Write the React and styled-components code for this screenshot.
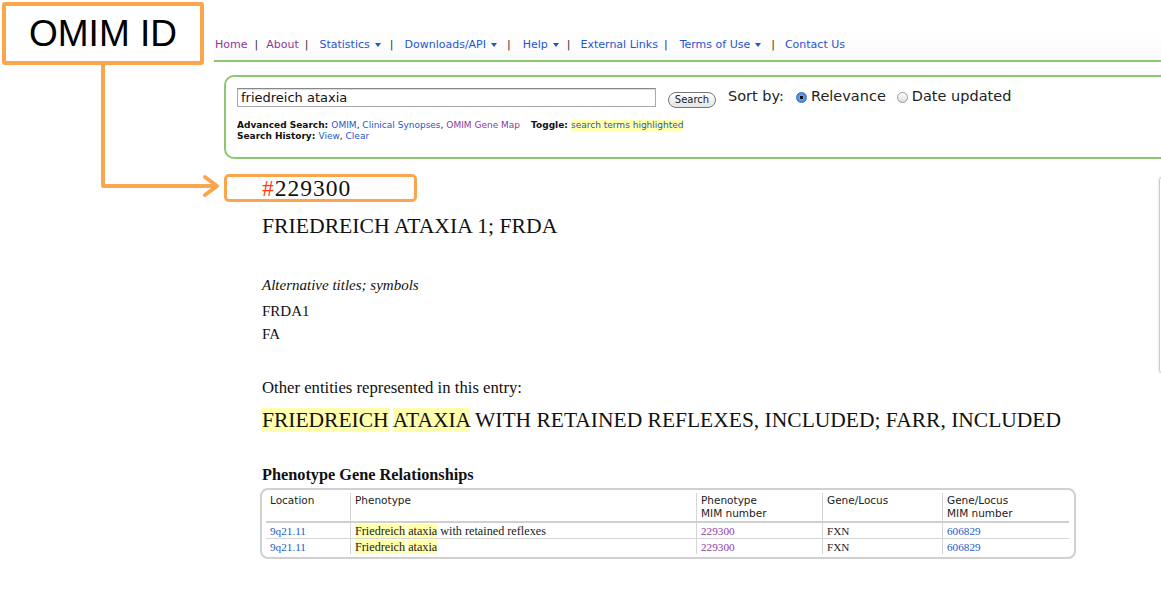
import React from "react";
import styled, { createGlobalStyle } from "styled-components";

const GlobalStyle = createGlobalStyle`
  body {
    margin: 0;
    background: #fff;
    overflow: hidden;
  }
`;

const BLUE = "#1f56cc";
const PURPLE = "#8b3a9c";
const ORANGE = "#fba64c";
const GREEN = "#8cc870";
const HIGHLIGHT = "#ffffad";

const Page = styled.div`
  position: relative;
  width: 1161px;
  height: 591px;
  padding-left: 214px;
  box-sizing: border-box;
  overflow: hidden;
`;

const Nav = styled.nav`
  margin-top: 28px;
  height: 32px;
  display: flex;
  align-items: center;
  border-bottom: 2px solid ${GREEN};
  background: linear-gradient(#fff, #fafafa);
  font-family: "DejaVu Sans", sans-serif;
  font-size: 11px;
  width: 1000px;
`;

const NavLink = styled.a`
  color: ${(p) => (p.$visited ? PURPLE : BLUE)};
  text-decoration: none;
  display: inline-flex;
  align-items: center;
  gap: 5px;
  padding-left: ${(p) => (p.$first ? "1px" : "0")};
`;

const Caret = styled.span`
  width: 0;
  height: 0;
  border-left: 3px solid transparent;
  border-right: 3px solid transparent;
  border-top: 4px solid ${BLUE};
  margin-top: 1px;
`;

const Sep = styled.span`
  color: #333;
  margin: 0 ${(p) => p.$wide}px 0 ${(p) => p.$near}px;
`;

const SearchBox = styled.div`
  margin: 13px 0 0 10px;
  width: 1000px;
  height: 84px;
  box-sizing: border-box;
  border: 2px solid ${GREEN};
  border-radius: 10px;
  padding: 11px 11px;
  font-family: "DejaVu Sans", sans-serif;
`;

const SearchRow = styled.div`
  display: flex;
  align-items: center;
  height: 19px;
`;

const Input = styled.div`
  width: 419px;
  height: 19px;
  box-sizing: border-box;
  border: 1px solid #aaa;
  border-top-color: #888;
  box-shadow: inset 0 1px 1px rgba(0, 0, 0, 0.15);
  font-size: 13px;
  line-height: 17px;
  padding-left: 3px;
  color: #111;
`;

const SearchButton = styled.button`
  margin-left: 12px;
  margin-top: 4px;
  width: 48px;
  height: 16px;
  padding: 0;
  border: 1px solid #777;
  border-radius: 8px;
  background: linear-gradient(#fff, #e4e4e4);
  font-family: "DejaVu Sans", sans-serif;
  font-size: 10px;
  color: #222;
`;

const SortText = styled.span`
  margin-left: ${(p) => p.$gap || 0}px;
  margin-top: -3px;
  font-size: 14.5px;
  color: #222;
`;

const Radio = styled.span`
  display: inline-block;
  width: 11px;
  height: 11px;
  box-sizing: border-box;
  border-radius: 50%;
  margin: -1px 4px 0 ${(p) => p.$gap}px;
  border: 1px solid ${(p) => (p.$checked ? "#3a6fc0" : "#999")};
  background: ${(p) =>
    p.$checked
      ? "radial-gradient(circle, #111 0 1.5px, #6fa3e8 2px, #2f6ccf 100%)"
      : "linear-gradient(#fff, #ddd)"};
`;

const Options = styled.div`
  margin-top: 13px;
  font-size: 9px;
  line-height: 11px;
  color: #111;
`;

const OptLine = styled.div`
  display: flex;
  white-space: pre;
`;

const Bold = styled.b`
  font-weight: bold;
  margin-left: ${(p) => p.$gap || 0}px;
`;

const Link = styled.a`
  color: ${(p) => (p.$visited ? PURPLE : BLUE)};
  background: ${(p) => (p.$mark ? HIGHLIGHT : "transparent")};
  text-decoration: none;
`;

const Content = styled.div`
  display: flex;
  align-items: flex-start;
`;

const Entry = styled.div`
  width: 945px;
  flex-shrink: 0;
  padding-left: 48px;
  box-sizing: border-box;
  font-family: "Liberation Serif", serif;
  color: #111;
`;

const SidePanel = styled.div`
  flex-shrink: 0;
  margin-top: 17px;
  width: 160px;
  height: 196px;
  border: 1px solid #ccc;
  border-radius: 4px;
  box-shadow: -1px 0 2px rgba(0, 0, 0, 0.08);
`;

const MimId = styled.div`
  margin-top: 16px;
  font-size: 23.5px;
  line-height: 26px;
  letter-spacing: 1px;
`;

const Hash = styled.span`
  color: #ff3a10;
`;

const Title = styled.h1`
  margin: 12px 0 0;
  font-weight: normal;
  font-size: 21.7px;
  line-height: 26px;
`;

const Label = styled.div`
  margin-top: ${(p) => p.$top || 0}px;
  font-size: ${(p) => p.$size || 15}px;
  font-style: ${(p) => (p.$italic ? "italic" : "normal")};
  line-height: ${(p) => p.$lh || 20}px;
`;

const Included = styled.div`
  margin-top: 9px;
  font-size: 21.5px;
  line-height: 26px;
  white-space: nowrap;
`;

const Mark = styled.span`
  background: ${HIGHLIGHT};
`;

const SectionTitle = styled.h2`
  margin: 33px 0 0;
  font-size: 16.3px;
  line-height: 18px;
  font-weight: bold;
`;

const TableBox = styled.div`
  margin: 4px 0 0 -2px;
  width: 816px;
  box-sizing: border-box;
  border: 2px solid #d0d0d0;
  border-radius: 8px;
  padding: 3px 5px 3px 4px;
`;

const Table = styled.table`
  border-collapse: separate;
  border-spacing: 0;
  table-layout: fixed;
  width: 803px;
`;

const Th = styled.th`
  width: ${(p) => p.$w - (p.$first ? 8 : 9)}px;
  text-align: left;
  vertical-align: top;
  font-family: "DejaVu Sans", sans-serif;
  font-weight: normal;
  font-size: 10.5px;
  line-height: 13px;
  color: #222;
  padding: 1px 4px 1px;
  border-left: ${(p) => (p.$first ? "none" : "1px solid #d6d6d6")};
  border-bottom: 2px solid #d0d0d0;
  height: 26px;
`;

const Td = styled.td`
  font-size: ${(p) => (p.$wide ? 12.2 : 11.2)}px;
  line-height: 12px;
  padding: 2px 4px 1px;
  color: #222;
  white-space: nowrap;
  overflow: hidden;
  border-left: ${(p) => (p.$first ? "none" : "1px solid #d6d6d6")};
  border-bottom: ${(p) => (p.$last ? "none" : "1px solid #d6d6d6")};
`;

const Callout = styled.div`
  position: absolute;
  left: 2px;
  top: 2px;
  width: 202px;
  height: 63px;
  box-sizing: border-box;
  border: 4px solid ${ORANGE};
  border-radius: 3px;
  background: #fff;
  display: flex;
  align-items: center;
  justify-content: center;
  font-family: "Liberation Sans", sans-serif;
  font-size: 37px;
  color: #000;
  z-index: 2;
`;

const Connector = styled.svg`
  position: absolute;
  left: 0;
  top: 0;
  pointer-events: none;
  z-index: 1;
`;

const IdFrame = styled.div`
  position: absolute;
  left: 224px;
  top: 174px;
  width: 193px;
  height: 28px;
  box-sizing: border-box;
  border: 3px solid ${ORANGE};
  border-radius: 5px;
  z-index: 1;
`;

const navItems = [
  { label: "Home", visited: true, sep: [7, 8] },
  { label: "About", visited: true, sep: [6, 11] },
  { label: "Statistics", caret: true, sep: [9, 11] },
  { label: "Downloads/API", caret: true, sep: [10, 12] },
  { label: "Help", caret: true, sep: [8, 10] },
  { label: "External Links", sep: [6, 12] },
  { label: "Terms of Use", caret: true, sep: [10, 10] },
  { label: "Contact Us" },
];

const columns = [
  { label: "Location", w: 84 },
  { label: "Phenotype", w: 346 },
  { label: "Phenotype\nMIM number", w: 126 },
  { label: "Gene/Locus", w: 120 },
  { label: "Gene/Locus\nMIM number", w: 127 },
];

const rows = [{ phenotype: "with retained reflexes" }, { phenotype: "" }];

export default function App() {
  return (
    <Page>
      <GlobalStyle />
      <Nav>
        {navItems.map((item, i) => (
          <React.Fragment key={item.label}>
            <NavLink $visited={item.visited} $first={i === 0}>
              {item.label}
              {item.caret && <Caret />}
            </NavLink>
            {item.sep && (
              <Sep $near={item.sep[0]} $wide={item.sep[1]}>
                |
              </Sep>
            )}
          </React.Fragment>
        ))}
      </Nav>

      <SearchBox>
        <SearchRow>
          <Input>friedreich ataxia</Input>
          <SearchButton>Search</SearchButton>
          <SortText $gap={12}>Sort by:</SortText>
          <Radio $checked $gap={12} />
          <SortText>Relevance</SortText>
          <Radio $gap={11} />
          <SortText>Date updated</SortText>
        </SearchRow>
        <Options>
          <OptLine>
            <Bold>Advanced Search: </Bold>
            <Link>OMIM</Link>, <Link>Clinical Synopses</Link>,{" "}
            <Link $visited>OMIM Gene Map</Link>
            <Bold $gap={11}>Toggle: </Bold>
            <Link $mark>search terms highlighted</Link>
          </OptLine>
          <OptLine>
            <Bold>Search History: </Bold>
            <Link>View</Link>, <Link>Clear</Link>
          </OptLine>
        </Options>
      </SearchBox>

      <Content>
        <Entry>
          <MimId>
            <Hash>#</Hash>229300
          </MimId>
          <Title>FRIEDREICH ATAXIA 1; FRDA</Title>
          <Label $top={36} $italic>
            Alternative titles; symbols
          </Label>
          <Label $top={5} $lh={23}>
            FRDA1
          </Label>
          <Label $lh={23}>FA</Label>
          <Label $top={32} $size={16.7}>
            Other entities represented in this entry:
          </Label>
          <Included>
            <Mark>FRIEDREICH</Mark> <Mark>ATAXIA</Mark> WITH RETAINED REFLEXES,
            INCLUDED; FARR, INCLUDED
          </Included>
          <SectionTitle>Phenotype Gene Relationships</SectionTitle>
          <TableBox>
            <Table>
              <thead>
                <tr>
                  {columns.map((c, i) => (
                    <Th key={c.label} $w={c.w} $first={i === 0}>
                      {c.label.split("\n").map((l) => (
                        <div key={l}>{l}</div>
                      ))}
                    </Th>
                  ))}
                </tr>
              </thead>
              <tbody>
                {rows.map((r, i) => {
                  const last = i === rows.length - 1;
                  return (
                    <tr key={i}>
                      <Td $first $last={last}>
                        <Link>9q21.11</Link>
                      </Td>
                      <Td $last={last} $wide>
                        <Mark>Friedreich</Mark> <Mark>ataxia</Mark>
                        {r.phenotype && ` ${r.phenotype}`}
                      </Td>
                      <Td $last={last}>
                        <Link $visited>229300</Link>
                      </Td>
                      <Td $last={last}>FXN</Td>
                      <Td $last={last}>
                        <Link>606829</Link>
                      </Td>
                    </tr>
                  );
                })}
              </tbody>
            </Table>
          </TableBox>
        </Entry>
        <SidePanel />
      </Content>

      <Callout>OMIM ID</Callout>
      <Connector width="230" height="210" viewBox="0 0 230 210">
        <path
          d="M103 64 V186 H216 M205 177 L217 186 L205 195"
          fill="none"
          stroke={ORANGE}
          strokeWidth="4"
          strokeLinejoin="round"
          strokeLinecap="round"
        />
      </Connector>
      <IdFrame />
    </Page>
  );
}
